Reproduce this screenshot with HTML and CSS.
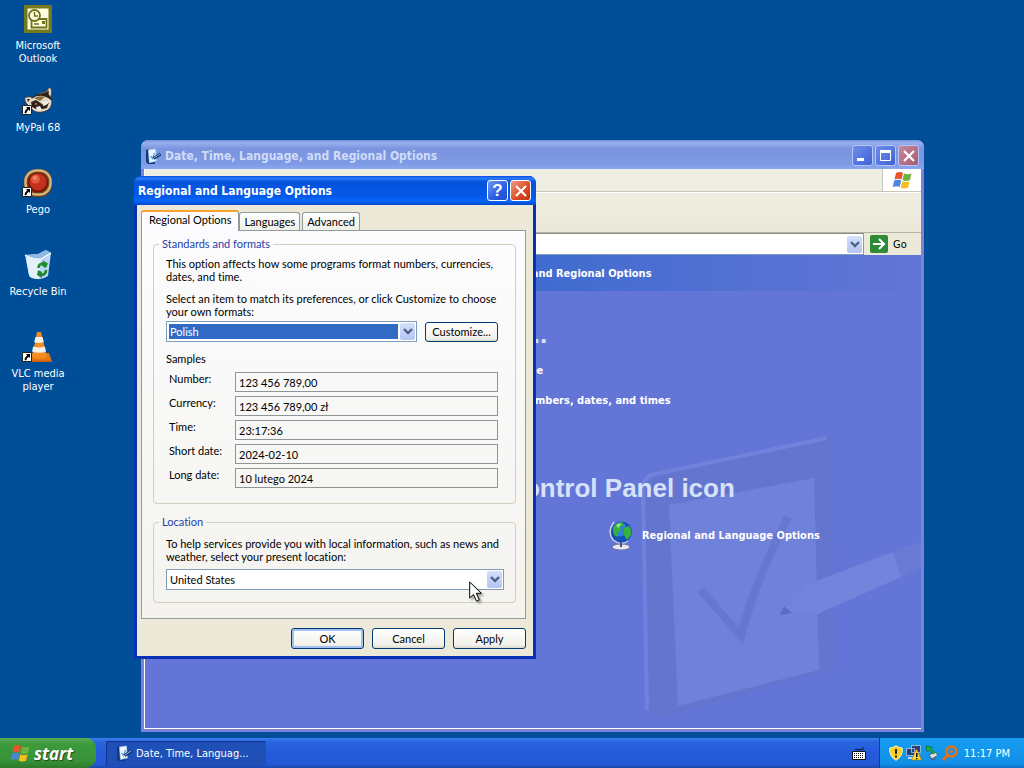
FILE: index.html
```html
<!DOCTYPE html>
<html lang="en">
<head>
    <meta charset="UTF-8">
    <meta name="viewport" content="width=device-width, initial-scale=1.0">
    <title>Regional and Language Options</title>
    <link rel="stylesheet" href="styles.css">
</head>
<body>
<svg class="sprites" width="0" height="0" aria-hidden="true">
    <symbol id="flag" viewBox="0 0 20 18">
        <path fill="#e8552b" d="M4 2q4-2 7 0L9.500 8.500q-3-1.600-7 0z"/>
        <path fill="#6cb33f" d="M12 2.500q3 1.600 7.500 0L18 9q-4 1.800-7.500 0z"/>
        <path fill="#4a86e0" d="M2.200 9.600q4-1.700 7 0L7.700 16q-3-1.600-7 0z"/>
        <path fill="#f7bd1e" d="M10.200 10.200q3.400 1.700 7.400 0L16 16.700q-4 1.600-7.300 0z"/>
    </symbol>
    <symbol id="chevron" viewBox="0 0 10 7">
        <path fill="none" stroke="#4d6185" stroke-width="2.400" d="M1 1l4 4 4-4"/>
    </symbol>
    <symbol id="cross" viewBox="0 0 12 12">
        <path stroke="#fff" stroke-width="2.200" d="M1 1l10 10M11 1L1 11"/>
    </symbol>
    <symbol id="shortcut" viewBox="0 0 10 10">
        <path fill="#fff" stroke="#222" d="M.5.5h9v9h-9z"/>
        <path fill="#000" d="M4 2h4v4L6.700 4.800Q4.500 6 4.300 8.300H2.600Q2.500 5 5.300 3.400z"/>
    </symbol>
    <symbol id="clipboard" viewBox="0 0 16 16">
        <path fill="#123c78" d="M1 2l2-1 1 14 6-1v2l-7 0-2-2z"/>
        <path fill="#eef8ff" stroke="#a9cdf2" stroke-width=".6" d="M3.500 2L10.500 1l.8 12L4.500 14.500z"/>
        <path fill="none" stroke="#6ea4dc" stroke-width="1.500" d="M5.500 8l2 2.500L9.500 5"/>
        <path stroke="#12335f" stroke-width="3" d="M8.500 10.500L15.500 6"/>
        <path stroke="#8fbaf0" d="M9 10l6-4"/>
    </symbol>
</svg>

<main class="desktop">
    <nav class="icons">
        <a href="#" class="icon">
            <svg width="28" height="28" viewBox="0 0 28 28">
                <path fill="#747a1c" d="M0 0h28v28H0z"/>
                <path fill="#fffde0" d="M3.500 3.500h21v21h-21z"/>
                <path fill="#fffde0" stroke="#6d731b" stroke-width="1.800" d="M7.500 14h15v8.500h-15z"/>
                <circle cx="10.500" cy="10.500" r="5.500" fill="#fffde0" stroke="#6d731b" stroke-width="1.800"/>
                <path fill="none" stroke="#6d731b" stroke-width="1.400" d="M10.500 7v4h3.500M10 19h5"/>
                <path fill="#6d731b" d="M18 16h3v3h-3z"/>
            </svg>
            <span>Microsoft Outlook</span>
        </a>
        <a href="#" class="icon">
            <svg width="32" height="28" viewBox="0 0 32 28">
                <path fill="#e3d9c6" stroke="#3c3026" stroke-width=".8" d="M4 16q-3-6 1-6 3-1 6 1 5-6 12-6l5-5q3 4 1 9 3 9-3 14-8 4-14 1z"/>
                <path fill="#30251d" d="M8 12q6-6 14-6l4-2 1 4q3 2 3 6-4-4-9-5-7-1-13 3z"/>
                <path fill="#8d6b49" d="M12 11q6-3 11-1l-5 4z"/>
                <path fill="#2c211b" d="M9 15l5-2 6 4 7-2-2 6-9 2-6-3z"/>
                <path fill="#f2eadc" d="M20 15q5 0 8-3-1 6-7 7zM14 20l4-1 2 4-5 1z"/>
                <path fill="#30251d" d="M5 12l3 0-2 3zM26 2l1 4-2-1z"/>
                <circle cx="14" cy="17" r="1" fill="#d98a35"/>
                <use href="#shortcut" y="18" width="10" height="10"/>
            </svg>
            <span>MyPal 68</span>
        </a>
        <a href="#" class="icon">
            <svg width="32" height="28" viewBox="0 0 32 28">
                <rect x="2" y="0" width="28" height="28" rx="12" fill="#704017"/>
                <rect x="3.500" y="1.500" width="25" height="24" rx="11" fill="none" stroke="#d5b27a" stroke-width="2.500"/>
                <circle cx="16" cy="13.500" r="10" fill="#7d1409"/>
                <circle cx="16" cy="13" r="8.500" fill="#c5321c"/>
                <circle cx="13.500" cy="10" r="4.500" fill="#e2583c"/>
                <circle cx="13" cy="9" r="2" fill="#f08a70"/>
                <use href="#shortcut" y="18" width="10" height="10"/>
            </svg>
            <span>Pego</span>
        </a>
        <a href="#" class="icon">
            <svg width="28" height="30" viewBox="0 0 28 30">
                <path fill="#b9d7f2" d="M1 5l13-1L22 0l5 3-3 23q-7 5-15 2-4-1-4-3z"/>
                <path fill="#8fb9e4" d="M1 5l13-1L22 0l5 3-10 6q-8 1-16-4z"/>
                <path fill="#e3f1fc" d="M2 7q8 4 15 2l-2 20q-9 0-10-4z"/>
                <path fill="none" stroke="#f7fcff" stroke-width="1.200" d="M1 5q8 5 16 4l10-6"/>
                <path fill="none" stroke="#1f8a2c" stroke-width="2.600" d="M14.500 18q0-4.500 5.500-4.500M22 20q0 5-5.500 5"/>
                <path fill="#1f8a2c" d="M19 10.500l5 3-2 4.500-4-2zM18 22v6l-5-3 1-5z"/>
            </svg>
            <span>Recycle Bin</span>
        </a>
        <a href="#" class="icon">
            <svg width="32" height="30" viewBox="0 0 32 30">
                <path fill="#e77614" d="M7 21h20l3 9H4z"/>
                <path fill="#f58d20" d="M15 0h4l6 25q-8 3-15 0z"/>
                <path fill="#f3efea" d="M13.500 5h7l1.300 5q-5 2-9.600 0zM11.200 14.500q6 2 11.600 0l1.200 5q-7 2.500-14 0z"/>
                <path fill="#c85e0b" d="M4 28.500h26V30H4z"/>
                <use href="#shortcut" y="20" width="10" height="10"/>
            </svg>
            <span>VLC media player</span>
        </a>
    </nav>

    <section class="window explorer">
        <header class="titlebar">
            <svg width="16" height="16"><use href="#clipboard"/></svg>
            <h1>Date, Time, Language, and Regional Options</h1>
            <button class="caption-btn" aria-label="Minimize">
                <svg width="19" height="19"><path fill="#fff" d="M4 12h7v3H4z"/></svg>
            </button>
            <button class="caption-btn" aria-label="Maximize">
                <svg width="19" height="19"><path fill="none" stroke="#fff" d="M4.500 4.500h10v10h-10z"/><path fill="#fff" d="M4 4h11v3H4z"/></svg>
            </button>
            <button class="caption-btn close" aria-label="Close">
                <svg width="12" height="12"><use href="#cross"/></svg>
            </button>
        </header>
        <div class="explorer-client">
            <div class="menubar">
                <div class="throbber"><svg width="20" height="18"><use href="#flag"/></svg></div>
            </div>
            <div class="toolbar"></div>
            <div class="addressbar">
                <div class="address">
                    <input type="text" aria-label="Address">
                    <button class="drop" aria-label="Show addresses"><svg width="10" height="7"><use href="#chevron"/></svg></button>
                </div>
                <button class="go">
                    <svg width="18" height="18" viewBox="0 0 18 18">
                        <rect width="18" height="18" rx="2" fill="#2d8a35"/>
                        <path fill="none" stroke="#fff" stroke-width="2" d="M3 9h11M9 4l5 5-5 5"/>
                    </svg>
                    Go
                </button>
            </div>
            <div class="category">Date, Time, Language, and Regional Options</div>
            <div class="tasks">
                <svg class="watermark" width="290" height="290" viewBox="0 0 290 290">
                    <path fill="#6375cf" d="M10 54q1-9 12-12L192 7q7-1 7 6l6 226-175 48q-10 0-10-8z"/>
                    <path fill="none" stroke="#7182dc" stroke-width="4" d="M16 280L12 58q0-11 12-14l172-36"/>
                    <path fill="#7081da" d="M38 75l145-27 5 192-141 36z"/>
                    <path fill="none" stroke="#6577cf" stroke-width="8" d="M70 160l40 46q12-50 47-119"/>
                    <path fill="#7384dd" d="M150 184l30-31 87-33 23-8v26l-103 46z"/>
                    <path fill="#5b6cc6" d="M149 185l4-9 8 7z"/>
                    <path fill="#6a7bd6" d="M262 122l28-10v26l-20 9z"/>
                </svg>
                <h2>Pick a task...</h2>
                <a href="#">Change the date and time</a>
                <a href="#">Change the format of numbers, dates, and times</a>
                <h2 class="pick">or pick a Control Panel icon</h2>
                <a href="#" class="applet">
                    <svg width="24" height="30" viewBox="0 0 24 30">
                        <ellipse cx="12" cy="27" rx="9" ry="3" fill="#e8e8f2" stroke="#70748e"/>
                        <path fill="none" stroke="#cfd3e2" stroke-width="1.500" d="M5 2Q-2 12 4 20q8 6 15 1"/>
                        <path stroke="#4b5278" stroke-width="2" d="M12 22v5"/>
                        <circle cx="12.500" cy="12" r="10.500" fill="#1552b5"/>
                        <circle cx="11" cy="9.500" r="7" fill="#3182d6"/>
                        <path fill="#35b33c" d="M4 8q4-6 9-6l2 3-4 2 1 4-4 1 1 5-4-2zM15 8l5-2q3 4 2 9l-4 5-3-5z"/>
                        <path fill="#9be77e" d="M7 5l4-2 1 2-3 3z"/>
                    </svg>
                    Regional and Language Options
                </a>
            </div>
        </div>
    </section>

    <form class="window dialog">
        <header class="titlebar">
            <h1>Regional and Language Options</h1>
            <button type="button" class="caption-btn help" aria-label="Help">?</button>
            <button type="button" class="caption-btn close" aria-label="Close">
                <svg width="12" height="12"><use href="#cross"/></svg>
            </button>
        </header>
        <div class="dialog-client">
            <div class="tabs" role="tablist">
                <button type="button" class="tab active" role="tab" aria-selected="true">Regional Options</button>
                <button type="button" class="tab" role="tab">Languages</button>
                <button type="button" class="tab" role="tab">Advanced</button>
            </div>
            <div class="panel">
                <fieldset>
                    <legend>Standards and formats</legend>
                    <p>This option affects how some programs format numbers, currencies, dates, and time.</p>
                    <label class="prompt" for="format">Select an item to match its preferences, or click Customize to choose your own formats:</label>
                    <div class="format-row">
                        <div class="combo focused">
                            <select id="format"><option>Polish</option></select>
                            <span class="drop"><svg width="10" height="7"><use href="#chevron"/></svg></span>
                        </div>
                        <button type="button" class="btn">Customize...</button>
                    </div>
                    <div class="samples-title">Samples</div>
                    <div class="samples">
                        <label for="number">Number:</label>
                        <input type="text" id="number" value="123 456 789,00" readonly>
                        <label for="currency">Currency:</label>
                        <input type="text" id="currency" value="123 456 789,00 zł" readonly>
                        <label for="time">Time:</label>
                        <input type="text" id="time" value="23:17:36" readonly>
                        <label for="shortDate">Short date:</label>
                        <input type="text" id="shortDate" value="2024-02-10" readonly>
                        <label for="longDate">Long date:</label>
                        <input type="text" id="longDate" value="10 lutego 2024" readonly>
                    </div>
                </fieldset>
                <fieldset class="location">
                    <legend>Location</legend>
                    <label for="country">To help services provide you with local information, such as news and weather, select your present location:</label>
                    <div class="combo">
                        <select id="country"><option>United States</option></select>
                        <span class="drop"><svg width="10" height="7"><use href="#chevron"/></svg></span>
                    </div>
                </fieldset>
            </div>
            <div class="actions">
                <button type="button" class="btn default">OK</button>
                <button type="button" class="btn">Cancel</button>
                <button type="button" class="btn">Apply</button>
            </div>
        </div>
    </form>

    <svg class="cursor" width="14" height="22" viewBox="0 0 14 22">
        <path fill="#fff" stroke="#000" d="M.7 1v16l3.800-3.600 3 6.800 2.800-1.300-3-6.600h5z"/>
    </svg>
</main>

<footer class="taskbar">
    <button class="start">
        <svg width="20" height="18"><use href="#flag"/></svg>
        start
    </button>
    <button class="task">
        <svg width="16" height="16"><use href="#clipboard"/></svg>
        Date, Time, Languag...
    </button>
    <svg class="keyboard" width="14" height="14" viewBox="0 0 14 14">
        <path fill="none" stroke="#0a1a4a" d="M3 3.500h8V1"/>
        <path fill="#fff" stroke="#111" d="M.5 5.500h13v8H.5z"/>
        <path stroke="#111" stroke-dasharray="1 1" d="M2 7.500h10M2 9.500h10M2 11.500h10"/>
    </svg>
    <div class="tray">
        <svg width="14" height="16" viewBox="0 0 14 16">
            <path fill="#f8cf28" stroke="#fff2b8" d="M7 .7Q10 3 13.300 3q.5 9-6.300 12.300Q.2 12 .7 3 4 3 7 .7z"/>
            <path fill="#222" d="M6 4h2v5H6zM6 10.500h2v2H6z"/>
        </svg>
        <svg width="16" height="16" viewBox="0 0 16 16">
            <path fill="#24407e" stroke="#cbd6ee" stroke-width=".7" d="M5.500.5h9v7h-9zM.5 3.500h8v7h-8z"/>
            <path fill="#cbd6ee" d="M2 12h6v2H2z"/>
            <path fill="#ffd52e" stroke="#a77b00" stroke-width=".6" d="M10.500 4l5 11h-10z"/>
            <path fill="#111" d="M10 8h1.500v4H10zM10 13h1.500v1.200H10z"/>
        </svg>
        <svg width="14" height="16" viewBox="0 0 14 16">
            <path fill="#dce2e8" stroke="#55606c" d="M4 10l6-3 3 3-6 4z"/>
            <path fill="none" stroke="#555d68" d="M6 14q4 2 5-1"/>
            <path fill="#27ad35" stroke="#116b20" stroke-width=".6" d="M1 1l6 1-1 2 4 4-2 1-4-4-2 2z"/>
        </svg>
        <svg width="16" height="16" viewBox="0 0 16 16">
            <circle cx="9.500" cy="6.500" r="5" fill="none" stroke="#e86f12" stroke-width="2.600"/>
            <path stroke="#e86f12" stroke-width="3" d="M6 10l-5 5"/>
            <circle cx="9.500" cy="6.500" r="1.500" fill="#e86f12"/>
        </svg>
        <time>11:17 PM</time>
    </div>
</footer>
</body>
</html>
```

FILE: styles.css
```css
* {
    box-sizing: border-box;
}

body {
    margin: 0;
    height: 100vh;
    display: flex;
    flex-direction: column;
    overflow: hidden;
    font-family: 'DejaVu Sans Condensed', 'DejaVu Sans', sans-serif;
    font-size: 11px;
    line-height: 13px;
    color: #000;
    background-color: #004e98;
}

button,
input,
select {
    font: inherit;
    color: inherit;
    margin: 0;
    padding: 0;
    border: none;
}

a {
    color: #fff;
    text-decoration: none;
}

h1,
h2,
p {
    margin: 0;
}

svg {
    flex-shrink: 0;
}

.sprites {
    position: absolute;
}

.desktop {
    position: relative;
    flex: 1;
    min-height: 0;
}

/* desktop icons */
.icons {
    display: grid;
    grid-auto-rows: 82px;
    width: 76px;
    padding-top: 4px;
}

.icon {
    display: flex;
    flex-direction: column;
    align-items: center;
    text-align: center;
}

.icon svg {
    height: 30px;
    margin-bottom: 5px;
}

.icon span {
    max-width: 64px;
}

/* windows */
.window {
    position: absolute;
    display: flex;
    flex-direction: column;
    border-radius: 7px 7px 0 0;
}

.titlebar {
    display: flex;
    align-items: center;
    gap: 2px;
    color: #fff;
}

.titlebar h1 {
    flex: 1;
    font-size: 12px;
    line-height: 16px;
}

.caption-btn {
    display: flex;
    align-items: center;
    justify-content: center;
    width: 21px;
    height: 21px;
    border: 1px solid #fff;
    border-radius: 3px;
    color: #fff;
    background: linear-gradient(135deg, #6f9af5, #2a5ce0 60%, #2050cc);
}

.caption-btn.close {
    background: linear-gradient(135deg, #f0997e, #dc4a24 60%, #bf3410);
}

.explorer {
    left: 141px;
    right: 100px;
    top: 140px;
    bottom: 6px;
    padding: 0 3px 3px;
    background: #7b82da;
}

.explorer .titlebar {
    height: 29px;
    margin: 0 -3px;
    padding: 2px 5px 0 4px;
    border-radius: 7px 7px 0 0;
    color: #d0dcf8;
    background: linear-gradient(#7490dd, #98b0ee 10%, #7a94de 30%, #7e9ae6 80%, #8aa6ec);
}

.explorer .titlebar h1 {
    padding-left: 2px;
}

.explorer .caption-btn {
    border-color: #b5c5f5;
    background: linear-gradient(135deg, #6f8eea, #3f63d4);
}

.explorer .caption-btn.close {
    background: linear-gradient(135deg, #c58a9c, #a85a70);
}

.explorer-client {
    flex: 1;
    display: flex;
    flex-direction: column;
    min-height: 0;
    border-left: 1px solid #fff;
    border-bottom: 1px solid #fff;
    background: #6375d6;
}

.menubar {
    display: flex;
    justify-content: flex-end;
    height: 23px;
    border-bottom: 1px solid #c9c6b8;
    background: #efeee4;
}

.throbber {
    display: flex;
    align-items: center;
    justify-content: center;
    width: 39px;
    border-left: 1px solid #c9c6b8;
    background: #fff;
}

.toolbar {
    height: 40px;
    border-top: 1px solid #fff;
    background: linear-gradient(#f0eee2, #ebe8d8);
}

.addressbar {
    display: flex;
    height: 23px;
    border-top: 1px solid #b5b3a8;
    background: #ece9d8;
}

.address {
    flex: 1;
    display: flex;
    align-items: center;
    margin-right: 6px;
    padding-right: 1px;
    border: 1px solid #7f9db9;
    border-top-color: #8a8a84;
    background: #fff;
}

.address input {
    flex: 1;
    min-width: 0;
    background: transparent;
}

.drop {
    display: flex;
    align-items: center;
    justify-content: center;
    width: 15px;
    height: 17px;
    border-radius: 2px;
    background: linear-gradient(#d6e0fc, #b3c4f2);
}

.go {
    display: flex;
    align-items: center;
    gap: 5px;
    width: 51px;
    background: transparent;
}

.category {
    height: 36px;
    padding: 12px 0 0 257px;
    font-weight: bold;
    color: #fff;
    background: linear-gradient(90deg, #3268cc 30%, #6375d6);
}

.tasks {
    position: relative;
    flex: 1;
    min-height: 0;
    padding: 29px 0 0 236px;
    font-weight: bold;
}

.tasks h2 {
    position: relative;
    margin-bottom: 16px;
    padding-left: 10px;
    font-family: 'Liberation Sans', Arial, sans-serif;
    font-size: 26px;
    line-height: 28px;
    color: #d6e2fa;
}

.tasks a {
    position: relative;
    display: block;
    padding-left: 17px;
    margin-bottom: 17px;
}

.tasks .pick {
    margin: 67px 0 18px;
}

.tasks .applet {
    display: flex;
    align-items: center;
    gap: 9px;
    padding-left: 228px;
}

.watermark {
    position: absolute;
    right: 0;
    bottom: 8px;
}

/* regional options dialog */
.dialog {
    left: 134px;
    top: 176px;
    width: 402px;
    padding: 0 3px 3px;
    background: #0831b4;
    font-family: Lato, 'Liberation Sans', sans-serif;
    font-variant-ligatures: none;
}

.dialog .titlebar {
    height: 29px;
    margin: 0 -3px;
    padding: 0 5px 0 4px;
    border-radius: 7px 7px 0 0;
    font-family: 'DejaVu Sans Condensed', 'DejaVu Sans', sans-serif;
    background: linear-gradient(#0a4be0, #2b7dfb 8%, #0553dc 20%, #0559e8 70%, #0668fb 85%, #0347c8);
}

.dialog .help {
    font-family: 'Liberation Sans', Arial, sans-serif;
    font-size: 17px;
    font-weight: bold;
}

.dialog-client {
    padding: 5px 7px 7px 4px;
    background: #ece9d8;
}

.tabs {
    display: flex;
    align-items: flex-end;
    gap: 2px;
    height: 20px;
}

.tab {
    height: 18px;
    padding: 0 4px;
    border: 1px solid #919b9c;
    border-bottom: none;
    border-radius: 3px 3px 0 0;
    background: linear-gradient(#fff, #f0f0ea);
}

.tab.active {
    z-index: 1;
    height: 21px;
    margin: 0 -2px -1px 0;
    padding: 0 7px 4px;
    border-top: 2px solid #f5a32a;
    background: #fcfcfe;
}

.panel {
    padding: 6px 9px 15px 11px;
    border: 1px solid #919b9c;
    background: linear-gradient(#fcfcfe, #f4f3ee);
}

fieldset {
    margin: 0;
    padding: 6px 17px 15px 12px;
    border: 1px solid #d0d0bf;
    border-radius: 4px;
}

legend {
    margin-left: -7px;
    padding: 0 3px;
    line-height: 14px;
    color: #1c3fa8;
}

.prompt {
    display: block;
    margin: 9px 0 3px;
}

.format-row {
    display: flex;
    align-items: center;
    gap: 8px;
}

.format-row .combo {
    flex: 1;
}

.combo {
    display: flex;
    align-items: center;
    gap: 2px;
    height: 21px;
    padding: 1px;
    border: 1px solid #7f9db9;
    background: #fff;
}

.combo select {
    flex: 1;
    height: 15px;
    margin-left: 1px;
    padding-left: 1px;
    appearance: none;
    background: transparent;
}

.combo.focused select {
    color: #fff;
    background: #316ac5;
}

.samples-title {
    margin: 10px 0 7px;
}

.samples {
    display: grid;
    grid-template-columns: 66px 1fr;
    gap: 4px 0;
    padding-left: 3px;
}

.samples input {
    height: 20px;
    min-width: 0;
    padding: 0 3px;
    border: 1px solid #8f9597;
    background: transparent;
}

.location {
    margin-top: 11px;
    padding: 8px 11px 12px 12px;
}

.location label {
    display: block;
    margin-bottom: 6px;
}

.actions {
    display: flex;
    justify-content: flex-end;
    gap: 8px;
    padding-top: 9px;
}

.btn {
    width: 73px;
    height: 21px;
    border: 1px solid #003c74;
    border-radius: 3px;
    background: linear-gradient(#fff, #f2f1ea 85%, #dcd8cc);
}

.format-row .btn {
    height: 20px;
}

.btn.default {
    box-shadow: inset 0 0 0 2px #a5c0f0;
}

.cursor {
    position: absolute;
    left: 469px;
    top: 581px;
    filter: drop-shadow(2px 2px 1px rgba(0, 0, 0, 0.35));
}

/* taskbar */
.taskbar {
    display: flex;
    align-items: center;
    height: 30px;
    color: #fff;
    background: linear-gradient(#3a80ee, #2a66e0 12%, #245bdb 50%, #2358d6 88%, #1c46ad);
}

.start {
    display: flex;
    align-items: center;
    gap: 4px;
    width: 96px;
    height: 30px;
    margin-right: 10px;
    padding-left: 10px;
    border-radius: 0 10px 10px 0;
    font-family: 'Open Sans', sans-serif;
    font-size: 17px;
    font-weight: bold;
    font-style: italic;
    color: #fff;
    text-shadow: 1px 1px 1px #1f4a1f;
    background: linear-gradient(#5eac56, #3c9a3c 20%, #389238 75%, #2b7a2b);
}

.task {
    display: flex;
    align-items: center;
    gap: 4px;
    width: 160px;
    height: 25px;
    padding-left: 10px;
    border-radius: 2px;
    box-shadow: inset 1px 1px 1px #12348c;
    background: #1e50b8;
}

.keyboard {
    margin-left: auto;
    margin-right: 13px;
}

.tray {
    display: flex;
    align-items: center;
    gap: 3px;
    height: 30px;
    padding: 0 14px 0 9px;
    border-left: 1px solid #0a3c9a;
    background: linear-gradient(#1a9cf2, #139aee 20%, #1290e8 85%, #0f70c4);
}

.tray time {
    margin-left: 3px;
}
```
